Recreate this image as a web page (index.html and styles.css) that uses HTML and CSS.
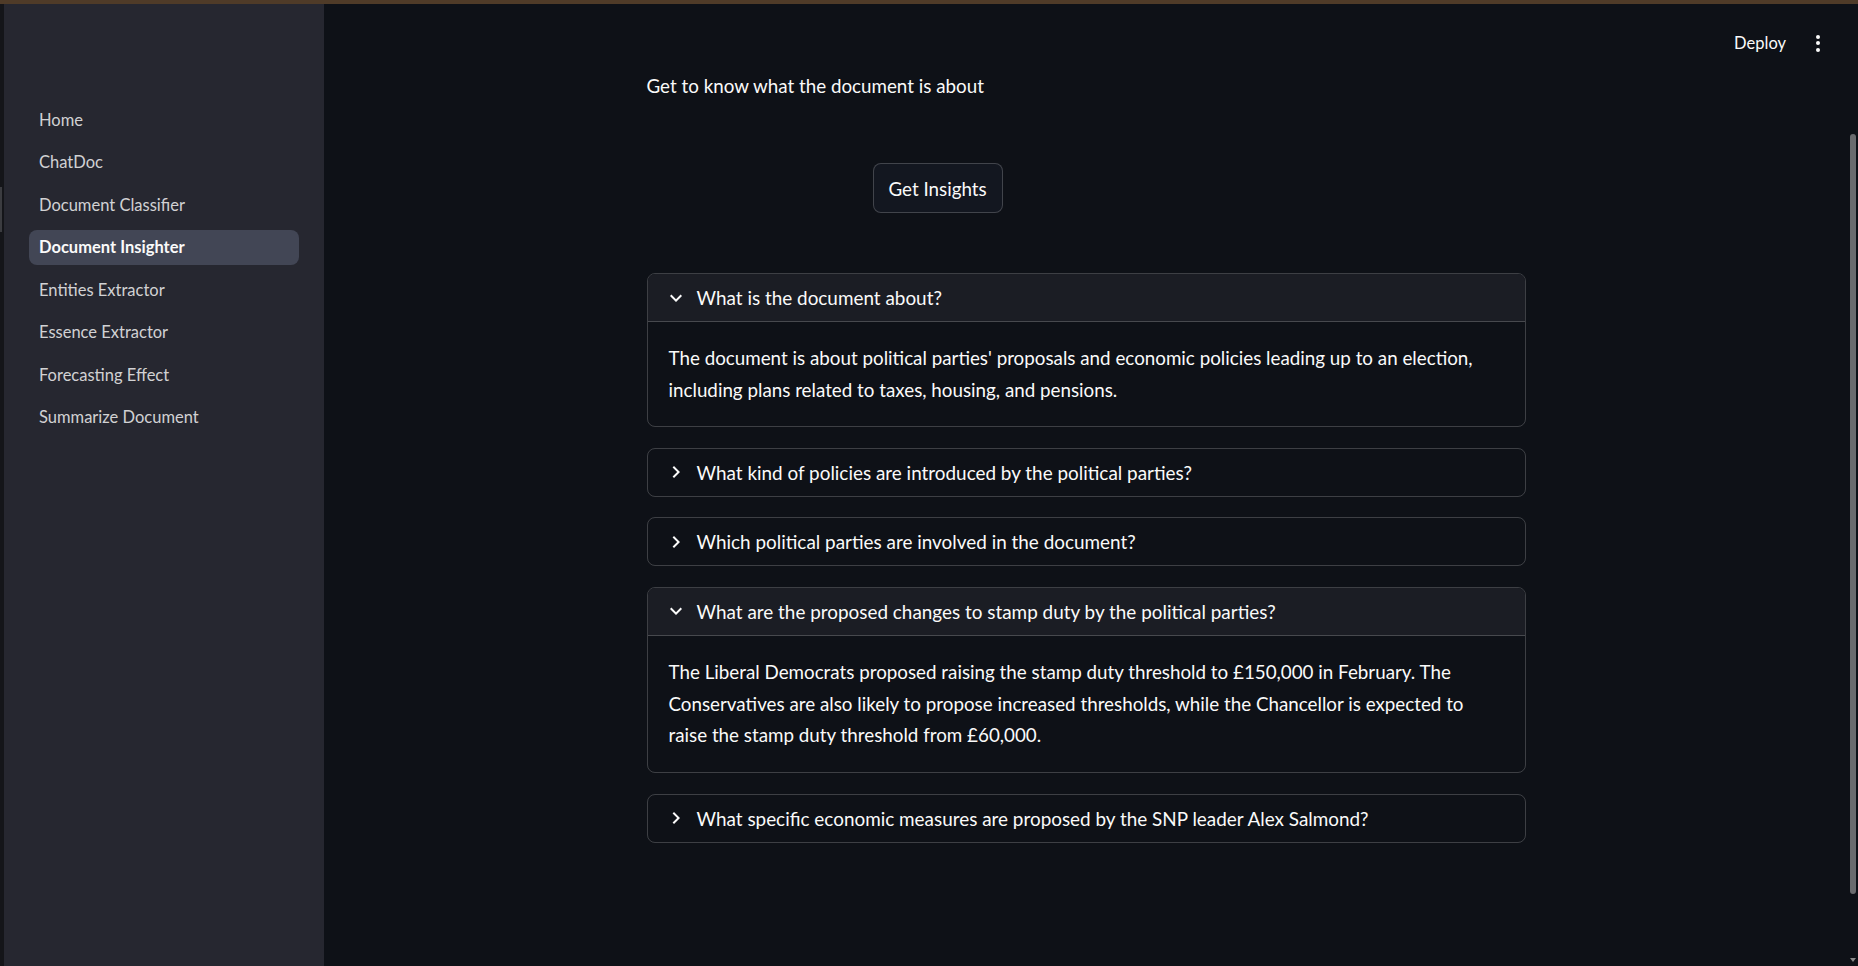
FILE: index.html
```html
<!DOCTYPE html>
<html lang="en">
<head>
<meta charset="utf-8">
<title>Document Insighter</title>
<link rel="stylesheet" href="styles.css">
</head>
<body>
<div class="topline"></div>
<div class="app">
  <div class="edge"><span class="edge-mark"></span></div>
  <aside class="sidebar">
    <nav class="nav">
      <a class="nav-item">Home</a>
      <a class="nav-item">ChatDoc</a>
      <a class="nav-item">Document Classifier</a>
      <a class="nav-item active">Document Insighter</a>
      <a class="nav-item">Entities Extractor</a>
      <a class="nav-item">Essence Extractor</a>
      <a class="nav-item">Forecasting Effect</a>
      <a class="nav-item">Summarize Document</a>
    </nav>
  </aside>
  <main class="main">
    <header class="toolbar">
      <span class="deploy">Deploy</span>
      <span class="kebab"><i></i><i></i><i></i></span>
    </header>
    <section class="content">
      <p class="intro">Get to know what the document is about</p>
      <div class="btn-row">
        <button class="btn">Get Insights</button>
      </div>
      <div class="expanders">
        <details class="exp" open>
          <summary class="exp-head">
            <svg class="chev" viewBox="0 0 24 24"><path d="M16.59 8.59L12 13.17 7.41 8.59 6 10l6 6 6-6z"/></svg>
            <span>What is the document about?</span>
          </summary>
          <div class="exp-body">The document is about political parties' proposals and economic policies leading up to an election, including plans related to taxes, housing, and pensions.</div>
        </details>
        <details class="exp">
          <summary class="exp-head">
            <svg class="chev" viewBox="0 0 24 24"><path d="M10 6L8.59 7.41 13.17 12l-4.58 4.59L10 18l6-6z"/></svg>
            <span>What kind of policies are introduced by the political parties?</span>
          </summary>
        </details>
        <details class="exp">
          <summary class="exp-head">
            <svg class="chev" viewBox="0 0 24 24"><path d="M10 6L8.59 7.41 13.17 12l-4.58 4.59L10 18l6-6z"/></svg>
            <span>Which political parties are involved in the document?</span>
          </summary>
        </details>
        <details class="exp" open>
          <summary class="exp-head">
            <svg class="chev" viewBox="0 0 24 24"><path d="M16.59 8.59L12 13.17 7.41 8.59 6 10l6 6 6-6z"/></svg>
            <span>What are the proposed changes to stamp duty by the political parties?</span>
          </summary>
          <div class="exp-body">The Liberal Democrats proposed raising the stamp duty threshold to £150,000 in February. The Conservatives are also likely to propose increased thresholds, while the Chancellor is expected to raise the stamp duty threshold from £60,000.</div>
        </details>
        <details class="exp">
          <summary class="exp-head">
            <svg class="chev" viewBox="0 0 24 24"><path d="M10 6L8.59 7.41 13.17 12l-4.58 4.59L10 18l6-6z"/></svg>
            <span>What specific economic measures are proposed by the SNP leader Alex Salmond?</span>
          </summary>
        </details>
      </div>
    </section>
    <div class="scrollbar"><span class="thumb"></span><span class="arrow"></span></div>
  </main>
</div>
</body>
</html>
```

FILE: styles.css
```css
* { box-sizing: border-box; }
html, body { margin: 0; height: 100%; }
body {
  background: #0e1117;
  color: #fafafa;
  font-family: "Source Sans Pro", Lato, "Noto Sans", sans-serif;
  overflow: hidden;
}
.topline { height: 4px; background: #4f3b28; }
.app { display: flex; height: 962px; }
.edge { width: 4px; background: #141519; position: relative; }
.edge-mark { position: absolute; left: 0; top: 183px; width: 2px; height: 45px; background: #3b3c40; }
.sidebar { width: 320px; background: #262730; padding: 98px 25px 0 25px; }
.nav { display: flex; flex-direction: column; gap: 7.5px; }
.nav-item {
  display: flex; align-items: center;
  height: 35px; padding-left: 10px; border-radius: 8px;
  font-size: 16.5px; color: rgba(250,250,250,0.82);
}
.nav-item.active { background: #424655; color: #fafafa; font-weight: 700; }
.main { flex: 1; position: relative; padding-right: 10px; }
.toolbar {
  display: flex; align-items: center; justify-content: flex-end;
  padding: 0 38px 0 0; position: absolute; top: 0; right: 0; left: 0; height: 78px;
}
.deploy { font-size: 16.5px; color: #fafafa; margin-right: 30px; }
.kebab { display: flex; flex-direction: column; gap: 2.5px; }
.kebab i { display: block; width: 4px; height: 4px; border-radius: 50%; background: #fafafa; }
.content { width: 879px; margin: 0 auto; padding-top: 66px; }
.intro { margin: 0; font-size: 18.8px; line-height: 32px; }
.btn-row { padding: 61px 0 0 226px; }
.btn {
  height: 50px; padding: 0 15px; border-radius: 8px;
  border: 1px solid rgba(250,250,250,0.2); background: #131720;
  color: #fafafa; font: inherit; font-size: 18.8px;
}
.expanders { display: flex; flex-direction: column; gap: 20.5px; padding-top: 60px; }
.exp { border: 1px solid rgba(250,250,250,0.2); border-radius: 8px; overflow: hidden; }
.exp-head {
  list-style: none; display: flex; align-items: center;
  height: 47px; padding-left: 16px; gap: 9px; font-size: 18.9px;
}
.exp-head::-webkit-details-marker { display: none; }
.exp[open] .exp-head { background: #1b1d24; border-bottom: 1px solid rgba(250,250,250,0.2); height: 48px; }
.chev { width: 24px; height: 24px; fill: #fafafa; flex: none; }
.exp-body { padding: 20px 21px 21px 21px; font-size: 18.8px; line-height: 31.7px; }
.scrollbar { position: absolute; top: 0; right: 0; width: 10px; height: 100%; }
.thumb { position: absolute; left: 2px; top: 130px; width: 6px; height: 760px; border-radius: 3px; background: #6a6b6e; }
.arrow { position: absolute; left: 2px; bottom: 4px; width: 0; height: 0; border-left: 3px solid transparent; border-right: 3px solid transparent; border-top: 4px solid #8a8a8a; }
```
